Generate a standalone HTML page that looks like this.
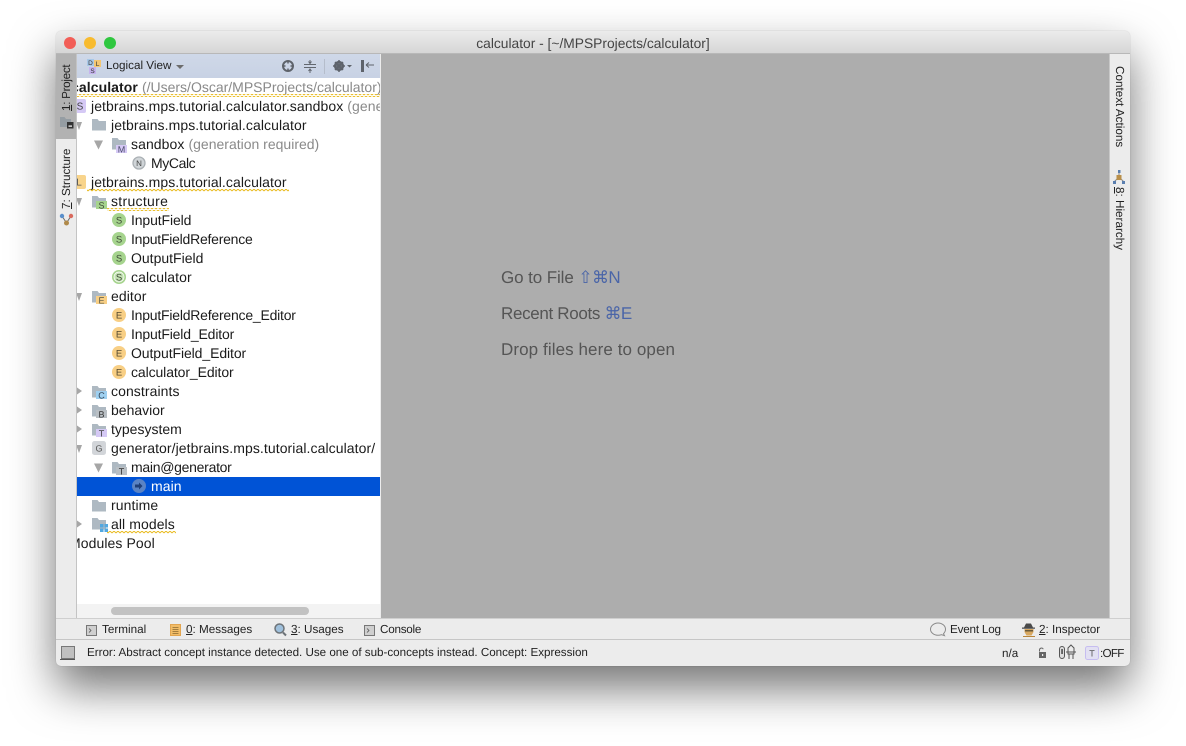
<!DOCTYPE html>
<html><head><meta charset="utf-8">
<style>
html,body{margin:0;padding:0;width:1186px;height:746px;overflow:hidden;background:#fff;font-family:"Liberation Sans","DejaVu Sans",sans-serif;color:#1c1c1c;text-rendering:geometricPrecision}
.abs,.t,.v,.s,.b{position:absolute;white-space:nowrap}
#win{position:absolute;left:56px;top:31px;width:1074px;height:635px;border-radius:5px;box-shadow:0 22px 45px rgba(0,0,0,.55),0 0 1px rgba(0,0,0,.25);background:#ececec}
#title{position:absolute;left:56px;top:31px;width:1074px;height:23px;background:linear-gradient(#ececec,#d6d6d6);border-radius:5px 5px 0 0;border-bottom:1px solid #b8b8b8;box-sizing:border-box;text-align:center;font-size:13.8px;line-height:25px;color:#444}
.dot{position:absolute;width:12px;height:12px;border-radius:50%;top:37px}
#tree{position:absolute;left:77px;top:78px;width:303px;height:526px;background:#fff;overflow:hidden}
.t{font-size:14px;letter-spacing:.08px;line-height:19px;height:19px;color:#1b1b1b}
.g{color:#8a8a8a}
.v{font-size:11.7px;line-height:14px;transform-origin:0 0;color:#222}
.b{font-size:11.7px;line-height:14px;color:#222}
.s{font-size:11.65px;line-height:14px;color:#222}
u{text-decoration:underline}
.h{font-size:17px;letter-spacing:.09px;line-height:20px;color:#555;position:absolute;left:501px;white-space:nowrap}
.h span{color:#4a65a8;letter-spacing:-.6px}
svg text{font-family:"Liberation Sans",sans-serif}
</style></head><body>
<div id="win"></div>
<div id="title">calculator - [~/MPSProjects/calculator]</div>
<div class="dot" style="left:64px;background:#f25e57"></div>
<div class="dot" style="left:84px;background:#f8bb2e"></div>
<div class="dot" style="left:104px;background:#2fc73f"></div>

<!-- left strip -->
<div class="abs" style="left:56px;top:54px;width:20px;height:564px;background:#ececec;border-right:1px solid #c4c4c4"></div>
<div class="abs" style="left:56px;top:54px;width:20px;height:85px;background:#b2b2b2"></div>
<!-- right strip -->
<div class="abs" style="left:1109px;top:54px;width:21px;height:564px;background:#ececec;border-left:1px solid #c8c8c8;box-sizing:border-box"></div>
<!-- editor -->
<div class="abs" style="left:381px;top:54px;width:728px;height:564px;background:#adadad"></div>
<!-- toolbar -->
<div class="abs" style="left:77px;top:54px;width:303px;height:24px;background:linear-gradient(#cfd8e8,#c8d2e4)"></div>
<div class="b" style="left:106px;top:59px;color:#222">Logical View</div>
<div class="abs" style="left:77px;top:604px;width:303px;height:14px;background:#f3f3f3"></div>
<div class="abs" style="left:111px;top:607px;width:198px;height:8px;border-radius:4px;background:#c2c2c2"></div>

<div id="tree">
<div class="t" style="left:-6px;top:0"><b>calculator</b> <span class="g" style="letter-spacing:0">(/Users/Oscar/MPSProjects/calculator)</span></div>
<div class="t" style="left:14px;top:19px">jetbrains.mps.tutorial.calculator.sandbox <span class="g">(generation required)</span></div>
<div class="t" style="left:34px;top:38px">jetbrains.mps.tutorial.calculator</div>
<div class="t" style="left:54px;top:57px">sandbox <span class="g" style="letter-spacing:0">(generation required)</span></div>
<div class="t" style="left:74px;top:76px;letter-spacing:-.4px">MyCalc</div>
<div class="t" style="left:14px;top:95px">jetbrains.mps.tutorial.calculator</div>
<div class="t" style="left:34px;top:114px;letter-spacing:.3px">structure</div>
<div class="t" style="left:54px;top:133px;letter-spacing:-.12px">InputField</div>
<div class="t" style="left:54px;top:152px;letter-spacing:-.24px">InputFieldReference</div>
<div class="t" style="left:54px;top:171px;letter-spacing:0">OutputField</div>
<div class="t" style="left:54px;top:190px">calculator</div>
<div class="t" style="left:34px;top:209px">editor</div>
<div class="t" style="left:54px;top:228px;letter-spacing:-.22px">InputFieldReference_Editor</div>
<div class="t" style="left:54px;top:247px;letter-spacing:-.16px">InputField_Editor</div>
<div class="t" style="left:54px;top:266px;letter-spacing:-.09px">OutputField_Editor</div>
<div class="t" style="left:54px;top:285px;letter-spacing:-.1px">calculator_Editor</div>
<div class="t" style="left:34px;top:304px">constraints</div>
<div class="t" style="left:34px;top:323px;letter-spacing:0">behavior</div>
<div class="t" style="left:34px;top:342px;letter-spacing:0">typesystem</div>
<div class="t" style="left:34px;top:361px">generator/jetbrains.mps.tutorial.calculator/</div>
<div class="t" style="left:54px;top:380px;letter-spacing:-.28px">main@generator</div>
<div class="abs" style="left:0;top:399px;width:303px;height:19px;background:#0053d6"></div>
<div class="t" style="left:74px;top:399px;color:#fff">main</div>
<div class="t" style="left:34px;top:418px">runtime</div>
<div class="t" style="left:34px;top:437px">all models</div>
<div class="t" style="left:-8px;top:456px">Modules Pool</div>
</div>

<!-- vertical labels -->
<div class="v" style="left:60px;top:111px;transform:rotate(-90deg);letter-spacing:-.3px"><u>1</u>: Project</div>
<div class="v" style="left:60px;top:209px;transform:rotate(-90deg)"><u>7</u>: Structure</div>
<div class="v" style="left:1126px;top:66px;transform:rotate(90deg)">Context Actions</div>
<div class="v" style="left:1126px;top:187px;transform:rotate(90deg)"><u>8</u>: Hierarchy</div>

<!-- empty text -->
<div class="h" style="top:268px;letter-spacing:-.1px">Go to File <span>⇧⌘N</span></div>
<div class="h" style="top:304px;letter-spacing:-.33px">Recent Roots <span>⌘E</span></div>
<div class="h" style="top:340px">Drop files here to open</div>

<!-- bottom bars -->
<div class="abs" style="left:56px;top:618px;width:1074px;height:1px;background:#cfcfcf"></div>
<div class="abs" style="left:56px;top:639px;width:1074px;height:1px;background:#c6c6c6"></div>
<div class="b" style="left:102px;top:623px">Terminal</div>
<div class="b" style="left:186px;top:623px"><u>0</u>: Messages</div>
<div class="b" style="left:291px;top:623px"><u>3</u>: Usages</div>
<div class="b" style="left:380px;top:623px;letter-spacing:-.25px">Console</div>
<div class="b" style="left:950px;top:623px;letter-spacing:-.2px">Event Log</div>
<div class="b" style="left:1039px;top:623px"><u>2</u>: Inspector</div>
<div class="s" style="left:87px;top:646px;letter-spacing:-.02px">Error: Abstract concept instance detected. Use one of sub-concepts instead. Concept: Expression</div>
<div class="s" style="left:1002px;top:647px">n/a</div>
<div class="s" style="left:1100px;top:647px;letter-spacing:-.7px">:OFF</div>

<svg class="abs" style="left:0;top:0;pointer-events:none" width="1186" height="746" viewBox="0 0 1186 746" font-size="9" text-anchor="middle">
<defs>
<clipPath id="c"><rect x="77" y="78" width="303" height="526"/></clipPath>
<path id="fo" d="M0 0h5.500l1.500 2h7v9.500h-14z" fill="#aeb9c2"/>
<pattern id="wp" width="4" height="3" patternUnits="userSpaceOnUse"><path d="M0 2L1 1 2 0 3 1 4 2" fill="none" stroke="#e8b818" stroke-width=".9"/></pattern>
</defs>
<!-- project strip folder icon -->
<path d="M60 117h4.500l1.500 2h5v8h-11z" fill="#959da3"/>
<rect x="67" y="122" width="6.500" height="6.500" fill="#333"/><rect x="68.500" y="125.500" width="3.500" height="1.200" fill="#fff"/>
<!-- structure icon -->
<g stroke="#6b6b6b" stroke-width="1" fill="none"><path d="M62 216l4.500 7 4.500-7"/></g>
<circle cx="62" cy="216" r="2.200" fill="#5a8fcb"/><circle cx="71" cy="216" r="2.200" fill="#d96a5e"/><circle cx="66.500" cy="223" r="2.500" fill="#b08a4a"/>
<!-- hierarchy icon -->
<g stroke="#8a8a8a" stroke-width="1"><path d="M1119 172v5M1119 177l-5 5M1119 177l5 5"/></g>
<rect x="1116.500" y="175" width="5" height="5" fill="#b98f4a"/>
<rect x="1118" y="170" width="2.500" height="3" fill="#5a7fb0"/><rect x="1113" y="181" width="3" height="3" fill="#5a7fb0"/><rect x="1122" y="181" width="3" height="3" fill="#5a7fb0"/>
<!-- logical view icon -->
<rect x="87" y="59" width="7" height="7" fill="#a8c8e8"/><rect x="94" y="60" width="7" height="7" fill="#f3c672"/><rect x="89" y="67" width="7" height="7" fill="#c6b4ee"/>
<g font-size="6.500" fill="#333"><text x="90.500" y="65">D</text><text x="97.500" y="66">L</text><text x="92.500" y="73">S</text></g>
<path d="M176 65h8l-4 4z" fill="#6c6c6c"/>
<!-- toolbar icons -->
<circle cx="288" cy="66" r="5" fill="none" stroke="#5e636b" stroke-width="2"/><path d="M288 60.500v3M288 68.500v3M282.500 66h3M290.500 66h3" stroke="#5e636b" stroke-width="1.500"/>
<path d="M304 64.500h12M304 67.500h12M310 60v3M308.500 61.500l1.500 2 1.500-2M310 69v4M308.500 71l1.500-2 1.500 2" stroke="#62676f" stroke-width="1" fill="none"/>
<rect x="324" y="59" width="1" height="15" fill="#b5bdcb"/>
<circle cx="339" cy="66" r="3.800" fill="none" stroke="#5e636b" stroke-width="2.600"/><path d="M339 60v12M333 66h12M335 62l8 8M343 62l-8 8" stroke="#5e636b" stroke-width="1.500"/>
<path d="M347 65h5l-2.500 2.500z" fill="#5e636b"/>
<rect x="361" y="60" width="3" height="12" fill="#5e636b"/><path d="M366 65h8M366 65l3-2.500M366 65l3 2.500" stroke="#5e636b" stroke-width="1" fill="none"/>

<g clip-path="url(#c)" fill="#3f4a38">
<!-- wavy -->
<rect x="77" y="94" width="303" height="3" fill="url(#wp)"/>
<rect x="87" y="189" width="202" height="3" fill="url(#wp)"/>
<rect x="107" y="208" width="62" height="3" fill="url(#wp)"/>
<rect x="107" y="531" width="69" height="3" fill="url(#wp)"/>
<!-- arrows -->
<g fill="#a6a6a6">
<path d="M76 122h6l-3 8zM76 198h6l-3 8zM76 293h6l-3 8zM76 445h6l-3 8z"/>
<path d="M94 140.500h9l-4.500 9zM94 463.500h9l-4.500 9z"/>
<path d="M77 387.500l5 3.500-5 3.500zM77 406.500l5 3.500-5 3.500zM77 425.500l5 3.500-5 3.500zM77 520.500l5 3.500-5 3.500z"/>
</g>
<!-- solution and language icons -->
<rect x="72" y="99" width="14" height="14" rx="2" fill="#d5c9f5"/><text x="80" y="109.500" font-size="10" fill="#444">S</text>
<rect x="72" y="175" width="14" height="14" rx="2" fill="#f8d48c"/><text x="79" y="185.500" font-size="10" fill="#555">L</text>
<!-- folders -->
<use href="#fo" x="92" y="119"/>
<use href="#fo" x="112" y="138"/><rect x="116" y="145" width="11" height="8" fill="#d5c9f5"/><text x="121.500" y="152.500" fill="#4a4a6a">M</text>
<use href="#fo" x="92" y="196"/><rect x="96" y="201" width="11" height="8" fill="#a6d48e"/><text x="101.500" y="208.500">S</text>
<use href="#fo" x="92" y="291"/><rect x="96" y="296" width="11" height="8" fill="#f8cf85"/><text x="101.500" y="303.500" fill="#554">E</text>
<use href="#fo" x="92" y="386"/><rect x="96" y="391" width="11" height="8" fill="#9fd0f0"/><text x="101.500" y="398.500" fill="#345">C</text>
<use href="#fo" x="92" y="405"/><rect x="96" y="410" width="11" height="8" fill="#b9bfc4"/><text x="101.500" y="417.500" fill="#333">B</text>
<use href="#fo" x="92" y="424"/><rect x="96" y="429" width="11" height="8" fill="#d5c9f5"/><text x="101.500" y="436.500" fill="#444">T</text>
<rect x="92" y="441" width="14" height="14" rx="2.500" fill="#d2d5d9"/><text x="99" y="451.500" fill="#555">G</text>
<use href="#fo" x="112" y="462"/><rect x="116" y="467" width="11" height="8" fill="#b9bfc4"/><text x="121.500" y="474.500" fill="#333">T</text>
<use href="#fo" x="92" y="500"/>
<use href="#fo" x="92" y="518"/>
<rect x="100" y="524" width="3.500" height="3.500" fill="#52a8e0"/><rect x="104.500" y="524" width="3.500" height="3.500" fill="#52a8e0"/><rect x="100" y="528.500" width="3.500" height="3.500" fill="#52a8e0"/><rect x="104.500" y="528.500" width="3.500" height="3.500" fill="#52a8e0"/>
<!-- circles -->
<circle cx="139" cy="163" r="6" fill="#d0d5d8" stroke="#aab0b4" stroke-width="1.300"/><text x="139" y="166" font-size="8" fill="#444">N</text>
<g font-size="9.500">
<circle cx="119" cy="220" r="7" fill="#a6d48e"/><text x="119" y="223.500">S</text>
<circle cx="119" cy="239" r="7" fill="#a6d48e"/><text x="119" y="242.500">S</text>
<circle cx="119" cy="258" r="7" fill="#a6d48e"/><text x="119" y="261.500">S</text>
<circle cx="119" cy="277" r="7" fill="#a6d48e"/><circle cx="119" cy="277" r="5" fill="#c4e2b4" stroke="#fff" stroke-width=".7"/><text x="119" y="280.500">S</text>
<g fill="#554a30">
<circle cx="119" cy="315" r="7" fill="#f8cf85"/><text x="119" y="318.500">E</text>
<circle cx="119" cy="334" r="7" fill="#f8cf85"/><text x="119" y="337.500">E</text>
<circle cx="119" cy="353" r="7" fill="#f8cf85"/><text x="119" y="356.500">E</text>
<circle cx="119" cy="372" r="7" fill="#f8cf85"/><text x="119" y="375.500">E</text>
</g></g>
<circle cx="139" cy="486" r="7" fill="#5a83c4"/><path d="M135 484.500h4v-2l3.500 3.500-3.500 3.500v-2h-4z" fill="#1f3f78"/>
</g>

<!-- bottom icons -->
<g fill="#cfcfcf" stroke="#777" stroke-width="1"><rect x="86.500" y="625.500" width="10" height="10"/><rect x="364.500" y="625.500" width="10" height="10"/></g>
<path d="M89 628.500l2 2-2 2M367 628.500l2 2-2 2" fill="none" stroke="#555" stroke-width=".8"/>
<rect x="170.500" y="624.500" width="10" height="11" fill="#f2bd68" stroke="#e2a550"/>
<path d="M172.500 627.500h6M172.500 629.500h6M172.500 631.500h6M172.500 633.500h6" stroke="#8a6a30" stroke-width=".8"/>
<circle cx="279.500" cy="628.500" r="4.500" fill="#9fc0dc" stroke="#6d7378" stroke-width="1.500"/><path d="M283 632.500l3 3" stroke="#6d7378" stroke-width="2"/>
<path d="M938 623c4 0 7.500 2.700 7.500 6.300 0 1.800-.8 3.200-2 4.400l1 2-3-1c-1.100.4-2.300.6-3.500.6-4 0-7.500-2.700-7.500-6s3.500-6.300 7.500-6.300z" fill="none" stroke="#8a8a8a" stroke-width="1"/>
<!-- inspector -->
<path d="M1024 627.500l2-4h5l2 4h2v1.200h-13v-1.200z" fill="#4a4a4a"/>
<path d="M1024.500 629h9v3l-2 3.500h-5l-2-3.500z" fill="#d8a860"/><path d="M1025 630h8v1.500h-8z" fill="#6a5a3a"/>
<path d="M1023 636h12v1h-12z" fill="#b8863a"/>
<!-- status left -->
<rect x="61.500" y="646.500" width="13" height="12" fill="#c0c0c0" stroke="#777" stroke-width="1"/><path d="M60 659.500h15" stroke="#555"/>
<!-- status right -->
<path d="M1039.500 651.500v-1.500a2 2 0 0 1 3.800-.8" fill="none" stroke="#666" stroke-width="1"/><rect x="1039" y="652" width="7" height="6" fill="#666"/><rect x="1042" y="654" width="1.200" height="2" fill="#eee"/>
<rect x="1059.500" y="646.500" width="5" height="12" rx="2.500" fill="#ddd" stroke="#555" stroke-width="1"/><rect x="1061.300" y="649" width="1.500" height="5" fill="#444"/>
<path d="M1071 645l3 3v6h-6v-6zM1069 654v5M1073 654v5M1066 652h10" fill="none" stroke="#555" stroke-width="1"/>
<rect x="1085.500" y="646.500" width="13" height="13" rx="2" fill="#e2e0f2" stroke="#c6bdf0" stroke-width="1"/><text x="1092" y="656.500" font-size="9" fill="#555">T</text>
</svg>
</body></html>
